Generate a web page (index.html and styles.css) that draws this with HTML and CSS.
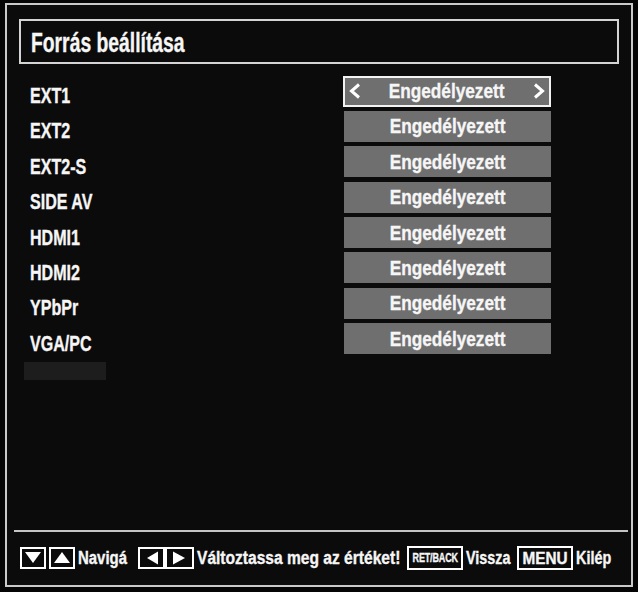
FILE: index.html
```html
<!DOCTYPE html>
<html lang="hu">
<head>
<meta charset="utf-8">
<title>Forrás beállítása</title>
<link rel="stylesheet" href="styles.css">
</head>
<body>
<div class="screen">
  <div class="title"><span class="title-text">Forrás beállítása</span></div>
  <ul class="sources">
    <li class="row"><span class="label">EXT1</span>
      <div class="value selected">
        <svg class="chev" width="12" height="16" viewBox="0 0 12 16"><polyline points="10,1.5 2.5,8 10,14.5" fill="none" stroke="#fff" stroke-width="3"/></svg>
        <span class="value-text">Engedélyezett</span>
        <svg class="chev" width="12" height="16" viewBox="0 0 12 16"><polyline points="2,1.5 9.5,8 2,14.5" fill="none" stroke="#fff" stroke-width="3"/></svg>
      </div>
    </li>
    <li class="row"><span class="label">EXT2</span><div class="value"><span class="value-text">Engedélyezett</span></div></li>
    <li class="row"><span class="label">EXT2-S</span><div class="value"><span class="value-text">Engedélyezett</span></div></li>
    <li class="row"><span class="label">SIDE AV</span><div class="value"><span class="value-text">Engedélyezett</span></div></li>
    <li class="row"><span class="label">HDMI1</span><div class="value"><span class="value-text">Engedélyezett</span></div></li>
    <li class="row"><span class="label">HDMI2</span><div class="value"><span class="value-text">Engedélyezett</span></div></li>
    <li class="row"><span class="label">YPbPr</span><div class="value"><span class="value-text">Engedélyezett</span></div></li>
    <li class="row"><span class="label">VGA/PC</span><div class="value"><span class="value-text">Engedélyezett</span></div></li>
  </ul>
  <div class="ghost"></div>
  <div class="sep"></div>
  <div class="footer">
    <svg class="key" width="55" height="22" viewBox="0 0 55 22">
      <rect x="1" y="1" width="24" height="20" fill="none" stroke="#fff" stroke-width="2"/>
      <rect x="30" y="1" width="24" height="20" fill="none" stroke="#fff" stroke-width="2"/>
      <polygon points="5,5 21,5 13,16" fill="#fff"/>
      <polygon points="34,16 50,16 42,5" fill="#fff"/>
    </svg>
    <span class="hint hint-nav"><span class="hint-text">Navigá</span></span>
    <svg class="key key-lr" width="56" height="22" viewBox="0 0 56 22">
      <rect x="1" y="1" width="25" height="20" fill="none" stroke="#fff" stroke-width="2"/>
      <rect x="28" y="1" width="27" height="20" fill="none" stroke="#fff" stroke-width="2"/>
      <polygon points="20,4.5 20,17.5 9,11" fill="#fff"/>
      <polygon points="35,4.5 35,17.5 47,11" fill="#fff"/>
    </svg>
    <span class="hint hint-change"><span class="hint-text">Változtassa meg az értéket!</span></span>
    <span class="btn btn-ret"><span class="btn-text">RET/BACK</span></span>
    <span class="hint hint-back"><span class="hint-text">Vissza</span></span>
    <span class="btn btn-menu"><span class="btn-text">MENU</span></span>
    <span class="hint hint-exit"><span class="hint-text">Kilép</span></span>
  </div>
</div>
</body>
</html>
```
FILE: styles.css
```css
html, body {
  margin: 0;
  padding: 0;
  background: #050505;
}
body {
  font-family: "Liberation Sans", Arial, sans-serif;
  font-weight: bold;
  color: #f6f6f6;
  width: 638px;
  height: 592px;
  overflow: hidden;
  -webkit-text-stroke: 0.35px #f6f6f6;
}
.screen {
  box-sizing: border-box;
  margin: 3px 0 0 5px;
  width: 628px;
  height: 584px;
  border: 2px solid #c9c9c9;
  background: #0b0b0b;
  display: flex;
  flex-direction: column;
}
.title {
  box-sizing: border-box;
  margin: 14px 0 0 12px;
  width: 600px;
  height: 45px;
  border: 2px solid #d4d4d4;
  padding-left: 10px;
  display: flex;
  align-items: center;
}
.title-text {
  display: inline-block;
  font-size: 28px;
  line-height: 1;
  transform: scaleX(0.69);
  transform-origin: left center;
  margin-top: 2px;
  white-space: nowrap;
}
.sources {
  list-style: none;
  margin: 11px 0 0 0;
  padding: 0;
  display: flex;
  flex-direction: column;
  gap: 4.4px;
}
.row {
  display: grid;
  grid-template-columns: 314px 207px;
  padding-left: 23px;
  height: 31px;
  align-items: center;
}
.label {
  display: inline-block;
  justify-self: start;
  font-size: 22px;
  line-height: 1;
  margin-top: 10px;
  transform: scaleX(0.73);
  transform-origin: left center;
  white-space: nowrap;
}
.value {
  box-sizing: border-box;
  height: 31px;
  background: #6f6f6f;
  display: flex;
  align-items: center;
  justify-content: center;
}
.value-text {
  display: inline-block;
  font-size: 21px;
  line-height: 1;
  margin-top: -1px;
  transform: scaleX(0.82);
  transform-origin: center center;
  white-space: nowrap;
}
.value.selected {
  width: 208px;
  margin-left: -1px;
  border: 2px solid #f2f2f2;
  justify-content: space-between;
  padding: 0 4px;
}
.chev {
  display: block;
}
.ghost {
  margin: 8px 0 0 17px;
  width: 82px;
  height: 18px;
  background: #1d1d1d;
}
.sep {
  margin: auto 3px 0 7px;
  height: 2px;
  background: #c4c4c4;
}
.footer {
  display: flex;
  align-items: center;
  height: 24px;
  padding: 14px 0 15px 13px;
}
.key {
  display: block;
  flex: none;
}
.key-lr {
  margin-left: 11px;
}
.hint {
  flex: none;
  margin-left: 3px;
  display: flex;
  align-items: center;
}
.hint-text {
  display: inline-block;
  font-size: 18px;
  line-height: 1;
  white-space: nowrap;
  transform-origin: left center;
  transform: scaleX(0.83);
}
.hint-nav { width: 49px; }
.hint-change { width: 203px; }
.hint-change .hint-text { transform: scaleX(0.865); }
.hint-back { width: 45px; }
.hint-back .hint-text { transform: scaleX(0.8); }
.hint-exit { width: 35px; }
.hint-exit .hint-text { transform: scaleX(0.8); }
.btn {
  box-sizing: border-box;
  flex: none;
  height: 24px;
  width: 56px;
  border: 2px solid #fff;
  display: flex;
  align-items: center;
  justify-content: center;
  font-weight: 900;
  line-height: 1;
  white-space: nowrap;
}
.btn-text {
  display: inline-block;
  transform-origin: center center;
}
.btn-ret {
  margin-left: 7px;
  font-size: 12px;
}
.btn-ret .btn-text {
  transform: scaleX(0.75);
  letter-spacing: -0.2px;
}
.btn-menu {
  margin-left: 6px;
  font-size: 17px;
}
.btn-menu .btn-text {
  transform: scaleX(0.9);
}
```
